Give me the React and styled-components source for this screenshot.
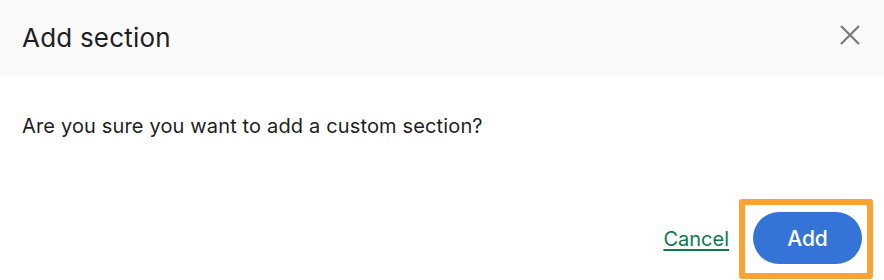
import styled, { createGlobalStyle } from 'styled-components';

const GlobalStyle = createGlobalStyle`
  html, body {
    margin: 0;
    padding: 0;
    background: #ffffff;
  }
  body {
    font-family: Inter, "Noto Sans", "Liberation Sans", sans-serif;
    -webkit-font-smoothing: antialiased;
  }
`;

const Dialog = styled.div`
  width: 884px;
  height: 280px;
  background: #ffffff;
  display: flex;
  flex-direction: column;
  overflow: hidden;
`;

const Header = styled.header`
  height: 76px;
  flex-shrink: 0;
  background: #fafafa;
  display: flex;
  align-items: center;
  justify-content: space-between;
  padding: 0 22px 0 22px;
  box-sizing: border-box;
`;

const Title = styled.h2`
  margin: 0;
  font-size: 26px;
  font-weight: 400;
  color: #1e1e22;
  letter-spacing: 0.2px;
  margin-top: -2px;
`;

const CloseButton = styled.button`
  border: 0;
  background: none;
  padding: 0;
  width: 22px;
  height: 22px;
  margin-right: 1px;
  margin-top: -6px;
  cursor: pointer;
  display: flex;
  align-items: center;
  justify-content: center;
`;

const Body = styled.div`
  padding: 37px 22px 0;
  flex: 1;
`;

const Message = styled.p`
  margin: 0;
  font-size: 20px;
  line-height: 26px;
  color: #1e1e22;
  letter-spacing: 0.15px;
`;

const Footer = styled.footer`
  display: flex;
  align-items: center;
  justify-content: flex-end;
  gap: 24px;
  padding: 0 22px 16px;
`;

const CancelLink = styled.a`
  font-size: 20px;
  color: #0b7a4d;
  text-decoration: underline;
  text-underline-offset: 3px;
  text-decoration-thickness: 1.5px;
  cursor: pointer;
  margin-top: 2px;
`;

const Highlight = styled.div`
  position: relative;
  display: flex;
`;

const HighlightFrame = styled.div`
  position: absolute;
  top: -13px;
  bottom: -15px;
  left: -14px;
  right: -11px;
  border: 6px solid #fba332;
  border-radius: 3px;
  pointer-events: none;
`;

const PrimaryButton = styled.button`
  width: 109px;
  height: 52px;
  border: 0;
  border-radius: 26px;
  background: #3574d7;
  color: #ffffff;
  font-family: inherit;
  font-size: 21px;
  font-weight: 500;
  cursor: pointer;
`;

function CloseIcon() {
  return (
    <svg width="22" height="22" viewBox="0 0 22 22" aria-hidden>
      <path d="M2 2 L20 20 M20 2 L2 20" stroke="#7a7a7a" strokeWidth="2.2" fill="none" />
    </svg>
  );
}

export default function App() {
  return (
    <>
      <GlobalStyle />
      <Dialog role="dialog" aria-label="Add section">
        <Header>
          <Title>Add section</Title>
          <CloseButton type="button" aria-label="Close">
            <CloseIcon />
          </CloseButton>
        </Header>
        <Body>
          <Message>Are you sure you want to add a custom section?</Message>
        </Body>
        <Footer>
          <CancelLink>Cancel</CancelLink>
          <Highlight>
            <PrimaryButton type="button">Add</PrimaryButton>
            <HighlightFrame />
          </Highlight>
        </Footer>
      </Dialog>
    </>
  );
}
